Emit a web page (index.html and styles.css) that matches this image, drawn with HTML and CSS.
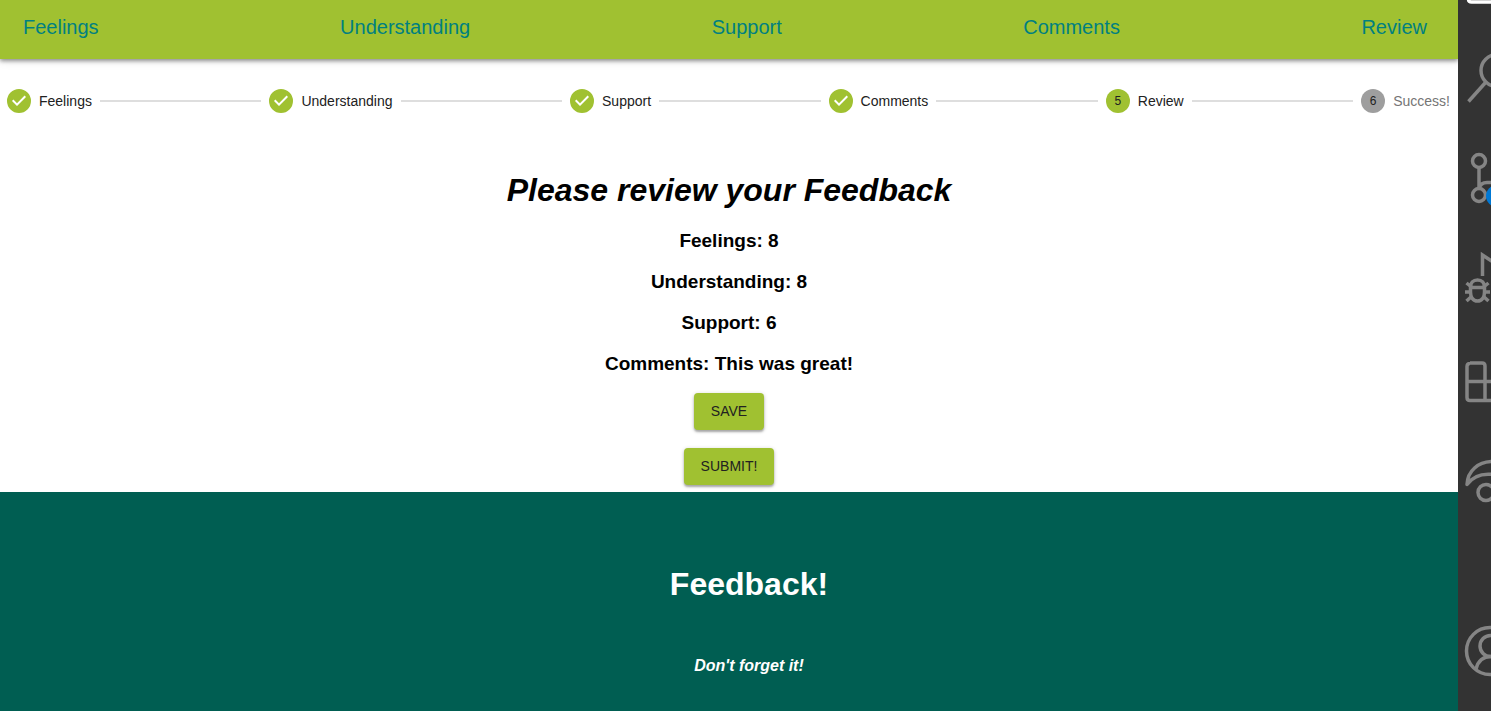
FILE: index.html
```html
<!DOCTYPE html>
<html lang="en">
<head>
<meta charset="utf-8">
<title>Feedback</title>
<link rel="stylesheet" href="styles.css">
</head>
<body>
<div class="app">
  <header class="app-bar">
    <nav class="nav">
      <a href="#feelings">Feelings</a>
      <a href="#understanding">Understanding</a>
      <a href="#support">Support</a>
      <a href="#comments">Comments</a>
      <a href="#review">Review</a>
    </nav>
  </header>

  <div class="stepper">
    <div class="step">
      <svg class="step-icon" viewBox="0 0 24 24"><path d="M12 0a12 12 0 1 0 0 24 12 12 0 0 0 0-24zm-2 17-5-5 1.400-1.400 3.600 3.600 7.600-7.600L19 8l-9 9z"/></svg>
      <span>Feelings</span>
    </div>
    <div class="connector"></div>
    <div class="step">
      <svg class="step-icon" viewBox="0 0 24 24"><path d="M12 0a12 12 0 1 0 0 24 12 12 0 0 0 0-24zm-2 17-5-5 1.400-1.400 3.600 3.600 7.600-7.600L19 8l-9 9z"/></svg>
      <span>Understanding</span>
    </div>
    <div class="connector"></div>
    <div class="step">
      <svg class="step-icon" viewBox="0 0 24 24"><path d="M12 0a12 12 0 1 0 0 24 12 12 0 0 0 0-24zm-2 17-5-5 1.400-1.400 3.600 3.600 7.600-7.600L19 8l-9 9z"/></svg>
      <span>Support</span>
    </div>
    <div class="connector"></div>
    <div class="step">
      <svg class="step-icon" viewBox="0 0 24 24"><path d="M12 0a12 12 0 1 0 0 24 12 12 0 0 0 0-24zm-2 17-5-5 1.400-1.400 3.600 3.600 7.600-7.600L19 8l-9 9z"/></svg>
      <span>Comments</span>
    </div>
    <div class="connector"></div>
    <div class="step">
      <span class="step-number">5</span>
      <span>Review</span>
    </div>
    <div class="connector"></div>
    <div class="step step-pending">
      <span class="step-number">6</span>
      <span>Success!</span>
    </div>
  </div>

  <main class="review">
    <h1>Please review your Feedback</h1>
    <h3>Feelings: 8</h3>
    <h3>Understanding: 8</h3>
    <h3>Support: 6</h3>
    <h3>Comments: This was great!</h3>
    <div class="actions">
      <button class="button" type="button">SAVE</button>
      <button class="button" type="button">SUBMIT!</button>
    </div>
  </main>

  <footer class="footer">
    <h1>Feedback!</h1>
    <h4>Don't forget it!</h4>
  </footer>
</div>

<aside class="activity-bar" aria-label="Activity bar">
  <svg viewBox="0 0 33 711" fill="none" stroke="#858585" stroke-width="3.500">
    <path d="M10.500-3V-1q0 3 3 3H36V-3z" stroke="#fff" fill="#505050"/>
    <circle cx="39" cy="70.500" r="16"/>
    <path d="M10.500 101.500 28 82"/>
    <circle cx="21" cy="161" r="6.500"/>
    <circle cx="21" cy="195" r="6.500"/>
    <path d="M21 167.500v21M21 188.500c1-4 4-6 8-6h6"/>
    <circle cx="39" cy="196" r="11" fill="#0078d4" stroke="none"/>
    <path d="M24.500 276V255L35 262"/>
    <path d="M12.500 287.500h14M19.500 280c-4.500 0-7 3-7 7v5c0 5 2.500 9 7 9s7-4 7-9v-5c0-4-2.500-7-7-7z"/>
    <path d="M8.500 283l5 4M30.500 283l-5 4M7 292h5.500M26.500 292H32M8.500 301l5-4.500M30.500 301l-5-4.500"/>
    <path d="M12 363H24q3 0 3 3v34M35 400.500H12q-3 0-3-3v-31q0-3 3-3M9 381.500H35"/>
    <path d="M35 461.500C20 461.500 9.500 471 9 484.500c5-7 13-11.500 26-10" stroke-linejoin="round"/>
    <circle cx="28" cy="492.500" r="8"/>
    <circle cx="32" cy="651" r="23.500"/>
    <circle cx="32.500" cy="646" r="10.500"/>
    <path d="M18 669c2-8 7-12.500 15-12.500"/>
  </svg>
</aside>
</body>
</html>
```

FILE: styles.css
```css
* { box-sizing: border-box; }

body {
  margin: 0;
  min-height: 100vh;
  display: flex;
  font-family: "Liberation Sans", Arial, sans-serif;
  color: #000;
  background: #fff;
}

.app {
  flex: 1;
  min-width: 0;
  display: flex;
  flex-direction: column;
}

.app-bar {
  background: #a0c131;
  padding: 12px 31px 17px 23px;
  box-shadow: 0 2px 4px rgba(0, 0, 0, 0.4), 0 1px 10px rgba(0, 0, 0, 0.12);
}

.nav {
  display: flex;
  justify-content: space-between;
  font-size: 20px;
  line-height: 30px;
}

.nav a {
  color: #008080;
  text-decoration: none;
}

.stepper {
  display: flex;
  align-items: center;
  gap: 8px;
  padding: 30px 8px 30px 7px;
}

.step {
  display: flex;
  align-items: center;
  gap: 8px;
  font-size: 14px;
  line-height: 20px;
  color: #212121;
}

.step-pending { color: #757575; }

.step-icon {
  width: 24px;
  height: 24px;
  fill: #a0c131;
}

.step-number {
  width: 24px;
  height: 24px;
  border-radius: 50%;
  background: #a0c131;
  color: #212121;
  font-size: 12px;
  line-height: 24px;
  text-align: center;
}

.step-pending .step-number { background: #9e9e9e; }

.connector {
  flex: 1;
  height: 2px;
  background: #dedede;
}

.review {
  display: flex;
  flex-direction: column;
  align-items: center;
  text-align: center;
  padding: 27px 0 7px;
}

.review h1 {
  margin: 0 0 10px;
  font-size: 32px;
  line-height: 40px;
  font-style: italic;
}

.review h3 {
  margin: 0;
  font-size: 19px;
  line-height: 41px;
}

.actions {
  display: flex;
  flex-direction: column;
  align-items: center;
  gap: 18px;
  padding-top: 9px;
}

.button {
  border: 0;
  border-radius: 4px;
  padding: 6px 17px;
  background: #a0c131;
  color: #212121;
  font-family: inherit;
  font-size: 14px;
  line-height: 25px;
  box-shadow: 0 2px 2px rgba(0, 0, 0, 0.25), 0 1px 4px rgba(0, 0, 0, 0.2);
}

.footer {
  flex: 1;
  padding: 72px 0 24px 40px;
  background: #005e52;
  color: #fff;
  text-align: center;
}

.footer h1 {
  margin: 0 0 52px;
  font-size: 32px;
  line-height: 40px;
}

.footer h4 {
  margin: 0;
  font-size: 16px;
  line-height: 20px;
  font-style: italic;
}

.activity-bar {
  flex: none;
  width: 33px;
  background: #333;
  overflow: hidden;
}

.activity-bar svg {
  display: block;
  width: 100%;
}
```
